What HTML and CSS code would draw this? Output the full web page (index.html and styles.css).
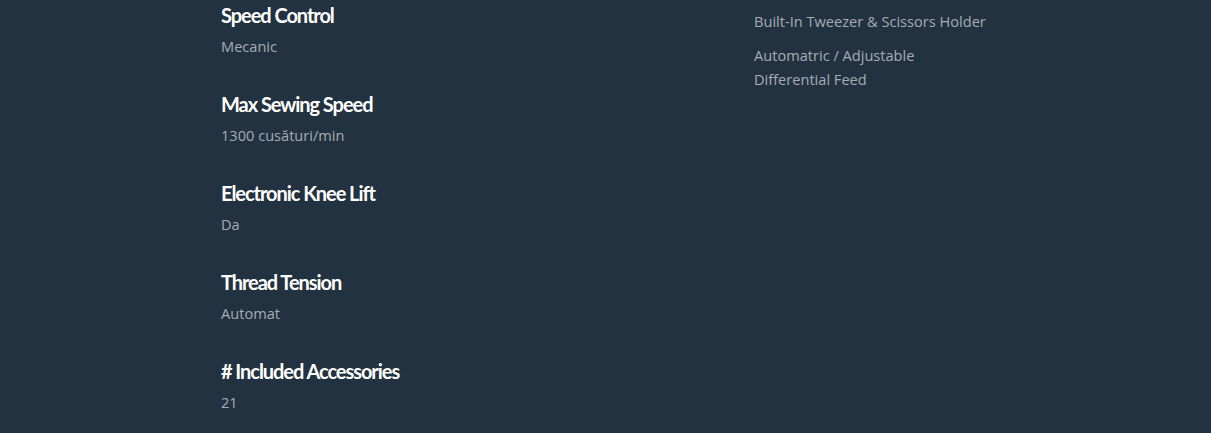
FILE: index.html
```html
<!DOCTYPE html>
<html lang="en">
<head>
    <meta charset="UTF-8" />
    <meta name="viewport" content="width=device-width, initial-scale=1.0" />
    <title>Specificatii</title>
    <link rel="stylesheet" href="styles.css">
</head>
<body>
    <div class="specs">
        <div class="specList">
            <div class="spec">
                <h4>Speed Control</h4>
                <p>Mecanic</p>
            </div>
            <div class="spec">
                <h4>Max Sewing Speed</h4>
                <p>1300 cusături/min</p>
            </div>
            <div class="spec">
                <h4>Electronic Knee Lift</h4>
                <p>Da</p>
            </div>
            <div class="spec">
                <h4>Thread Tension</h4>
                <p>Automat</p>
            </div>
            <div class="spec">
                <h4># Included Accessories</h4>
                <p>21</p>
            </div>
        </div>
        <ul class="features">
            <li>Built-In Tweezer &amp; Scissors Holder</li>
            <li>Automatric / Adjustable<br>Differential Feed</li>
        </ul>
    </div>
</body>
</html>
```

FILE: styles.css
```css
body {
    font-family: "Open Sans", "Noto Sans", sans-serif;
    background: #233240;
    margin: 0;
    padding: 0;
}
.specs {
    display: grid;
    grid-template-columns: 533px 1fr;
    padding-left: 221px;
}
.specList {
    padding-top: 3px;
}
.spec {
    margin-bottom: 35px;
}
.spec h4 {
    margin: 0;
    font-family: "Lato", sans-serif;
    font-weight: 700;
    font-size: 20px;
    line-height: 24px;
    letter-spacing: -1.05px;
    color: #ffffff;
}
.spec p {
    margin: 8px 0 0;
    font-size: 14.6px;
    line-height: 22px;
    color: #a3acb5;
}
.features {
    list-style: none;
    margin: 0;
    padding: 9px 0 0;
}
.features li {
    font-size: 14.6px;
    line-height: 24px;
    color: #a3acb5;
    margin-bottom: 10px;
}
```
